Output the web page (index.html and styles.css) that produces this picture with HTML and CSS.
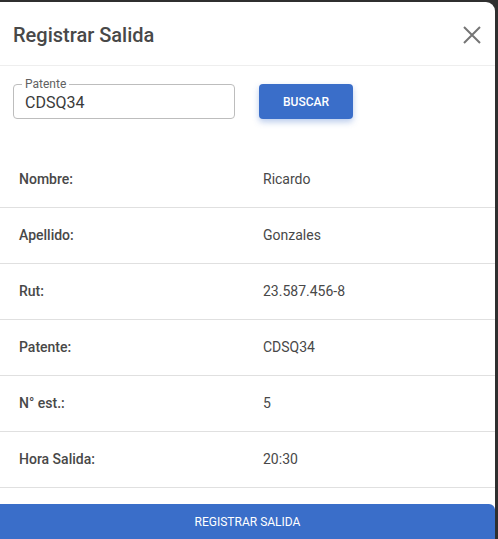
FILE: index.html
```html
<!DOCTYPE html>
<html lang="es">
<head>
<meta charset="utf-8">
<link rel="stylesheet" href="styles.css">
</head>
<body>
<div class="dialog">
  <div class="header">
    <h2 class="title">Registrar Salida</h2>
    <button class="close" aria-label="Cerrar">
      <svg width="18" height="18" viewBox="0 0 18 18"><path d="M1 1L17 17M17 1L1 17" stroke="#757575" stroke-width="2" fill="none"/></svg>
    </button>
  </div>
  <div class="search">
    <div class="field">
      <span class="legend">Patente</span>
      <span class="value">CDSQ34</span>
    </div>
    <button class="btn-buscar">BUSCAR</button>
  </div>
  <div class="rows">
    <div class="row"><span class="label">Nombre:</span><span class="data">Ricardo</span></div>
    <div class="row"><span class="label">Apellido:</span><span class="data">Gonzales</span></div>
    <div class="row"><span class="label">Rut:</span><span class="data">23.587.456-8</span></div>
    <div class="row"><span class="label">Patente:</span><span class="data">CDSQ34</span></div>
    <div class="row"><span class="label">N° est.:</span><span class="data">5</span></div>
    <div class="row"><span class="label">Hora Salida:</span><span class="data">20:30</span></div>
  </div>
  <button class="btn-registrar">REGISTRAR SALIDA</button>
</div>
</body>
</html>
```
FILE: styles.css
```css
html, body {
  margin: 0;
  padding: 0;
  background: #2f2f2f;
  height: 100%;
  overflow: hidden;
}
body {
  font-family: Roboto, "Liberation Sans", sans-serif;
  color: #424242;
  padding-top: 2px;
  padding-right: 3px;
  box-sizing: border-box;
}
.dialog {
  background: #fff;
  border-radius: 0 9px 0 0;
  height: 537px;
  display: flex;
  flex-direction: column;
  overflow: hidden;
}
.header {
  display: flex;
  align-items: center;
  justify-content: space-between;
  height: 63px;
  padding: 0 14px 0 13px;
  border-bottom: 1px solid #eeeeee;
  flex: none;
}
.title {
  margin: 0;
  font-size: 20px;
  font-weight: 500;
  color: #484848;
  padding-top: 2px;
}
.close {
  background: none;
  border: none;
  padding: 0;
  width: 18px;
  height: 18px;
  display: flex;
  margin-top: 2px;
}
.search {
  display: flex;
  align-items: flex-start;
  padding: 18px 0 0 13px;
  gap: 24px;
  height: 86px;
  flex: none;
  box-sizing: border-box;
}
.field {
  position: relative;
  width: 222px;
  height: 35px;
  box-sizing: border-box;
  border: 1px solid #bdbdbd;
  border-radius: 4px;
  padding: 0 11px;
  display: flex;
  align-items: center;
}
.legend {
  position: absolute;
  top: -8px;
  left: 8px;
  font-size: 12px;
  color: #616161;
  padding: 0 3px;
  background: #fff;
  line-height: 14px;
}
.value {
  font-size: 16px;
  color: #3a3a3a;
  line-height: 18px;
  padding-top: 2px;
}
.btn-buscar {
  width: 94px;
  height: 35px;
  background: #3a6ec9;
  color: #fff;
  border: none;
  border-radius: 4px;
  font-family: inherit;
  font-size: 12px;
  font-weight: 500;
  box-shadow: 0 3px 6px rgba(58, 110, 201, 0.35);
}
.rows {
  flex: 1;
  display: flex;
  flex-direction: column;
}
.row {
  display: flex;
  align-items: center;
  height: 55px;
  border-bottom: 1px solid #e0e0e0;
  padding-left: 19px;
  padding-bottom: 2px;
  box-sizing: content-box;
  font-size: 14px;
}
.row {
  height: 53px;
}
.label {
  width: 244px;
  font-weight: 500;
  color: #484848;
}
.data {
  color: #484848;
}
.btn-registrar {
  flex: none;
  height: 35px;
  background: #3a6ec9;
  color: #fff;
  border: none;
  border-radius: 0 6px 0 0;
  font-family: inherit;
  font-size: 12px;
  margin: 0;
  width: 100%;
}
```
